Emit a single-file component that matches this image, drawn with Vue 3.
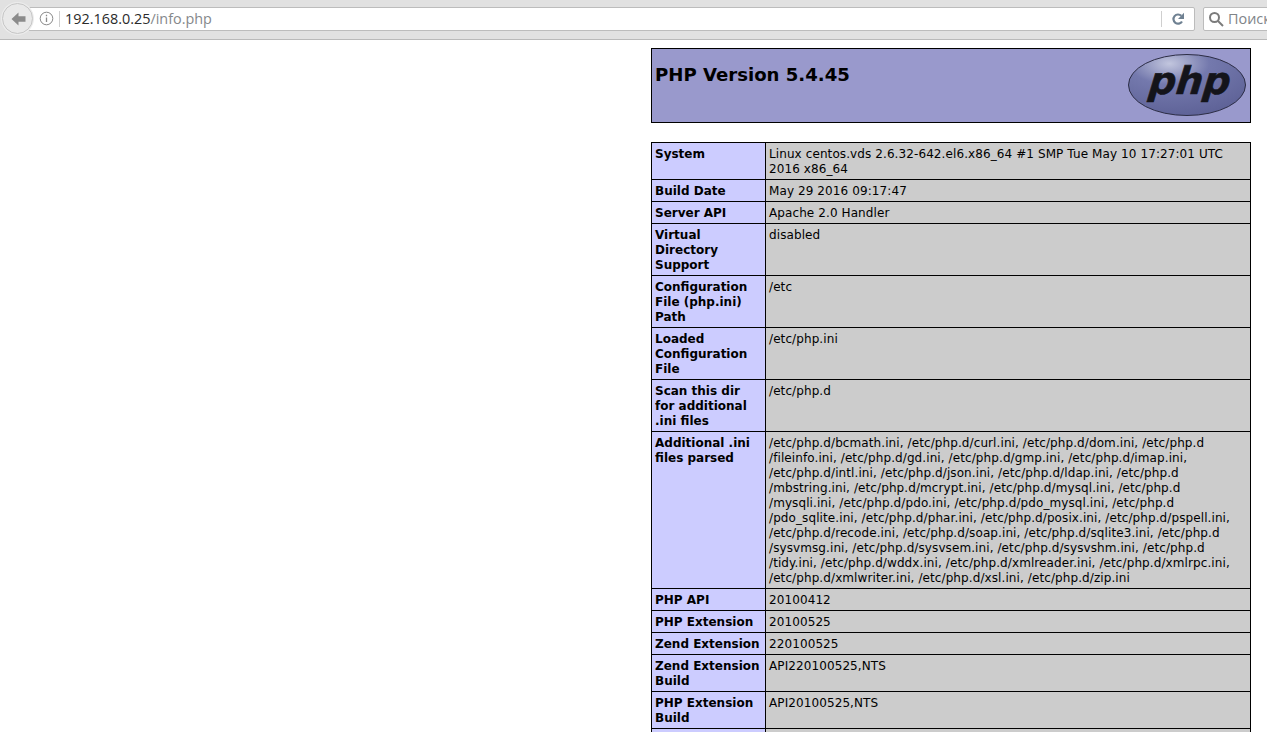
<script setup>
const rows = [
  ['System', ['Linux centos.vds 2.6.32-642.el6.x86_64 #1 SMP Tue May 10 17:27:01 UTC', '2016 x86_64']],
  ['Build Date', ['May 29 2016 09:17:47']],
  ['Server API', ['Apache 2.0 Handler']],
  ['Virtual<br>Directory<br>Support', ['disabled']],
  ['Configuration<br>File (php.ini)<br>Path', ['/etc']],
  ['Loaded<br>Configuration<br>File', ['/etc/php.ini']],
  ['Scan this dir<br>for additional<br>.ini files', ['/etc/php.d']],
  ['Additional .ini<br>files parsed', [
    '/etc/php.d/bcmath.ini, /etc/php.d/curl.ini, /etc/php.d/dom.ini, /etc/php.d',
    '/fileinfo.ini, /etc/php.d/gd.ini, /etc/php.d/gmp.ini, /etc/php.d/imap.ini,',
    '/etc/php.d/intl.ini, /etc/php.d/json.ini, /etc/php.d/ldap.ini, /etc/php.d',
    '/mbstring.ini, /etc/php.d/mcrypt.ini, /etc/php.d/mysql.ini, /etc/php.d',
    '/mysqli.ini, /etc/php.d/pdo.ini, /etc/php.d/pdo_mysql.ini, /etc/php.d',
    '/pdo_sqlite.ini, /etc/php.d/phar.ini, /etc/php.d/posix.ini, /etc/php.d/pspell.ini,',
    '/etc/php.d/recode.ini, /etc/php.d/soap.ini, /etc/php.d/sqlite3.ini, /etc/php.d',
    '/sysvmsg.ini, /etc/php.d/sysvsem.ini, /etc/php.d/sysvshm.ini, /etc/php.d',
    '/tidy.ini, /etc/php.d/wddx.ini, /etc/php.d/xmlreader.ini, /etc/php.d/xmlrpc.ini,',
    '/etc/php.d/xmlwriter.ini, /etc/php.d/xsl.ini, /etc/php.d/zip.ini'
  ]],
  ['PHP API', ['20100412']],
  ['PHP Extension', ['20100525']],
  ['Zend Extension', ['220100525']],
  ['Zend Extension<br>Build', ['API220100525,NTS']],
  ['PHP Extension<br>Build', ['API20100525,NTS']],
  ['', []]
]
</script>

<template>
  <div class="page">
    <header class="toolbar">
      <button class="back" aria-label="Back">
        <svg width="18" height="18" viewBox="0 0 18 18"><path d="M9.500 2.500 2.500 9 9.500 15.500V11.700H16.500V6.300H9.500Z" fill="#8b8b8b"/></svg>
      </button>
      <div class="urlbar">
        <svg class="info" width="15" height="15" viewBox="0 0 15 15" fill="none" stroke="#8a8a8a"><circle cx="7.500" cy="7.500" r="6.300"/><path d="M7.500 6.500V11M7.500 3.800V5.200" stroke-width="1.300"/></svg>
        <span class="sep"></span>
        <span class="host">192.168.0.25</span><span class="path">/info.php</span>
        <span class="spacer"></span>
        <span class="sep end"></span>
        <svg class="reload" width="14" height="14" viewBox="0 0 14 14" fill="none"><path d="M11 9.500A4.600 4.600 0 1 1 10.300 3.800" stroke="#6f8192" stroke-width="2.200"/><path d="M13 0.800V7H7Z" fill="#6f8192"/></svg>
      </div>
      <div class="search">
        <svg width="16" height="16" viewBox="0 0 16 16" fill="none" stroke="#7b7b7b" stroke-width="2"><circle cx="6.500" cy="6.500" r="4.500"/><path d="M10 10 15 15"/></svg>
        <span>Поиск</span>
      </div>
    </header>
    <main class="content">
      <table class="head">
        <tbody>
          <tr>
            <td>
              <svg class="logo" width="120" height="64" viewBox="0 0 120 64">
                <defs>
                  <radialGradient id="oval" cx="35%" cy="15%" r="85%">
                    <stop offset="0" stop-color="#c2c6de"/>
                    <stop offset=".4" stop-color="#7479ad"/>
                    <stop offset="1" stop-color="#5f6398"/>
                  </radialGradient>
                </defs>
                <ellipse cx="60" cy="32" rx="58.500" ry="30.500" fill="url(#oval)" stroke="#2c2d45" stroke-width="1"/>
                <text class="logotext" x="66" y="41.500" text-anchor="middle" transform="skewX(-6)">php</text>
              </svg>
              <h1>PHP Version 5.4.45</h1>
            </td>
          </tr>
        </tbody>
      </table>
      <table class="info-table">
        <tbody>
          <tr v-for="row in rows" :key="row[0]">
            <td class="e" v-html="row[0]"></td>
            <td class="v"><div v-for="line in row[1]" :key="line">{{ line }}</div></td>
          </tr>
        </tbody>
      </table>
    </main>
  </div>
</template>

<style>
html, body { margin: 0; background: #fff; overflow: hidden; }
</style>

<style scoped>
.page { height: 732px; overflow: hidden; background: #fff; }
.toolbar {
  box-sizing: border-box; height: 40px; background: #e1e1e1; border-bottom: 1px solid #b9b9b9;
  display: flex; align-items: center; padding: 0 0 2px 2px; position: relative; overflow: hidden;
}
.back {
  position: absolute; left: 2px; top: 3px; z-index: 1; box-sizing: border-box; width: 31px; height: 31px;
  border-radius: 50%; border: 1px solid #c6c6c6; background: #e9e9e9; padding: 0;
  display: flex; align-items: center; justify-content: center; box-shadow: 0 0 0 1px #ececec;
}
.urlbar {
  flex: none; box-sizing: border-box; margin-left: 22px; width: 1171px; height: 24px; background: #fff;
  border: 1px solid #bcbcbc; border-radius: 2px; display: flex; align-items: center; padding-left: 14px;
  font: 14.400px "Open Sans", sans-serif;
}
.info { margin-right: 5px; }
.sep { width: 1px; height: 16px; background: #cfcfcf; margin-right: 5px; }
.host { color: #2b2b2b; }
.path { color: #85888b; }
.spacer { flex: 1; }
.sep.end { margin-right: 9px; }
.reload { margin-right: 9px; }
.search {
  flex: none; box-sizing: border-box; margin-left: 8px; width: 90px; height: 24px; background: #fff;
  border: 1px solid #bcbcbc; border-radius: 2px; display: flex; align-items: center; gap: 4px; padding-left: 4px;
  font: 14.400px "Open Sans", sans-serif; color: #808488;
}
.content { padding: 8px 0 0 651px; font-family: "DejaVu Sans", sans-serif; color: #000; }
table { border-collapse: collapse; width: 600px; table-layout: fixed; }
td { border: 1px solid #000; font-size: 12px; line-height: 15px; padding: 4px 3px 2px; vertical-align: top; }
.head { margin-bottom: 19px; }
.head td { background: #9999cc; height: 67px; padding: 3px; box-sizing: content-box; }
.head h1 { margin: 11px 0 0; font-size: 18.100px; line-height: 24px; font-weight: 700; }
.logo { float: right; margin: 1px 0 0; }
.logotext {
  font-family: "DejaVu Sans", sans-serif; font-weight: 700; font-style: italic; font-size: 38px;
  fill: #14141a; stroke: #14141a; stroke-width: .6px;
}
.e { width: 107px; background: #ccccff; font-weight: 700; }
.v { background: #cccccc; white-space: nowrap; letter-spacing: .095px; }
</style>
